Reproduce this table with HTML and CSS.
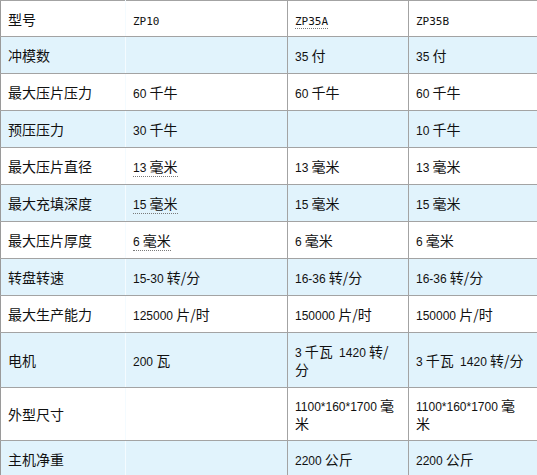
FILE: index.html
```html
<!DOCTYPE html>
<html lang="zh">
<head>
<meta charset="utf-8">
<title>参数表</title>
<link rel="stylesheet" href="styles.css">
</head>
<body>
<table class="spec">
  <colgroup>
    <col class="c1"><col class="c2"><col class="c3"><col class="c4">
  </colgroup>
  <tr class="w t1">
    <td>型号</td><td><span class="m">ZP10</span></td><td><span class="m dot">ZP35A</span></td><td><span class="m">ZP35B</span></td>
  </tr>
  <tr class="b">
    <td>冲模数</td><td></td><td><span class="n">35</span> 付</td><td><span class="n">35</span> 付</td>
  </tr>
  <tr class="w">
    <td>最大压片压力</td><td><span class="n">60</span> 千牛</td><td><span class="n">60</span> 千牛</td><td><span class="n">60</span> 千牛</td>
  </tr>
  <tr class="b">
    <td>预压压力</td><td><span class="n">30</span> 千牛</td><td></td><td><span class="n">10</span> 千牛</td>
  </tr>
  <tr class="w">
    <td>最大压片直径</td><td><span class="dot"><span class="n">13</span> 毫米</span></td><td><span class="n">13</span> 毫米</td><td><span class="n">13</span> 毫米</td>
  </tr>
  <tr class="b">
    <td>最大充填深度</td><td><span class="dot"><span class="n">15</span> 毫米</span></td><td><span class="n">15</span> 毫米</td><td><span class="n">15</span> 毫米</td>
  </tr>
  <tr class="w">
    <td>最大压片厚度</td><td><span class="dot"><span class="n">6</span> 毫米</span></td><td><span class="n">6</span> 毫米</td><td><span class="n">6</span> 毫米</td>
  </tr>
  <tr class="b">
    <td>转盘转速</td><td><span class="n">15-30</span> 转/分</td><td><span class="n">16-36</span> 转/分</td><td><span class="n">16-36</span> 转/分</td>
  </tr>
  <tr class="w">
    <td>最大生产能力</td><td><span class="n">125000</span> 片/时</td><td><span class="n">150000</span> 片/时</td><td><span class="n">150000</span> 片/时</td>
  </tr>
  <tr class="b t2">
    <td>电机</td><td><span class="n">200</span> 瓦</td><td><span class="n">3</span> 千瓦&nbsp; <span class="n">1420</span> 转/<br>分</td><td><span class="n">3</span> 千瓦&nbsp; <span class="n">1420</span> 转/分</td>
  </tr>
  <tr class="w t3">
    <td>外型尺寸</td><td></td><td><span class="n">1100*160*1700</span> 毫<br>米</td><td><span class="n">1100*160*1700</span> 毫<br>米</td>
  </tr>
  <tr class="b">
    <td>主机净重</td><td></td><td><span class="n">2200</span> 公斤</td><td><span class="n">2200</span> 公斤</td>
  </tr>
</table>
</body>
</html>
```

FILE: styles.css
```css
html, body {
  margin: 0;
  padding: 0;
  background: #ffffff;
  overflow: hidden;
}

.spec {
  border-collapse: collapse;
  table-layout: fixed;
  width: 540px;
  font-family: "Noto Sans CJK SC", "Liberation Sans", sans-serif;
  font-size: 14px;
  color: #111111;
}

.c1 { width: 125px; }
.c2 { width: 162px; }
.c3 { width: 121px; }
.c4 { width: 132px; }

.spec td {
  border: 1px solid #a3a3a3;
  padding: 0 6px 0 7px;
  height: 36px;
  line-height: 18px;
  vertical-align: middle;
  white-space: nowrap;
}

.spec tr.t1 td {
  height: 35px;
}

.spec tr.t2 td {
  height: 54px;
}

.spec tr.t3 td {
  height: 52px;
}

.spec td:first-child {
  border-left-color: #9a9a9a;
  border-right-color: #f4fbff;
}

.spec tr.b td {
  background: #e1f3fc;
}

.spec tr.w td {
  background: #ffffff;
}

.n {
  font-family: "Liberation Sans", sans-serif;
  font-size: 12px;
  line-height: 1;
}

.m {
  font-family: "DejaVu Sans Mono", monospace;
  font-size: 11px;
  line-height: 1;
}

.dot {
  border-bottom: 1px dotted #7a7a7a;
}
```
